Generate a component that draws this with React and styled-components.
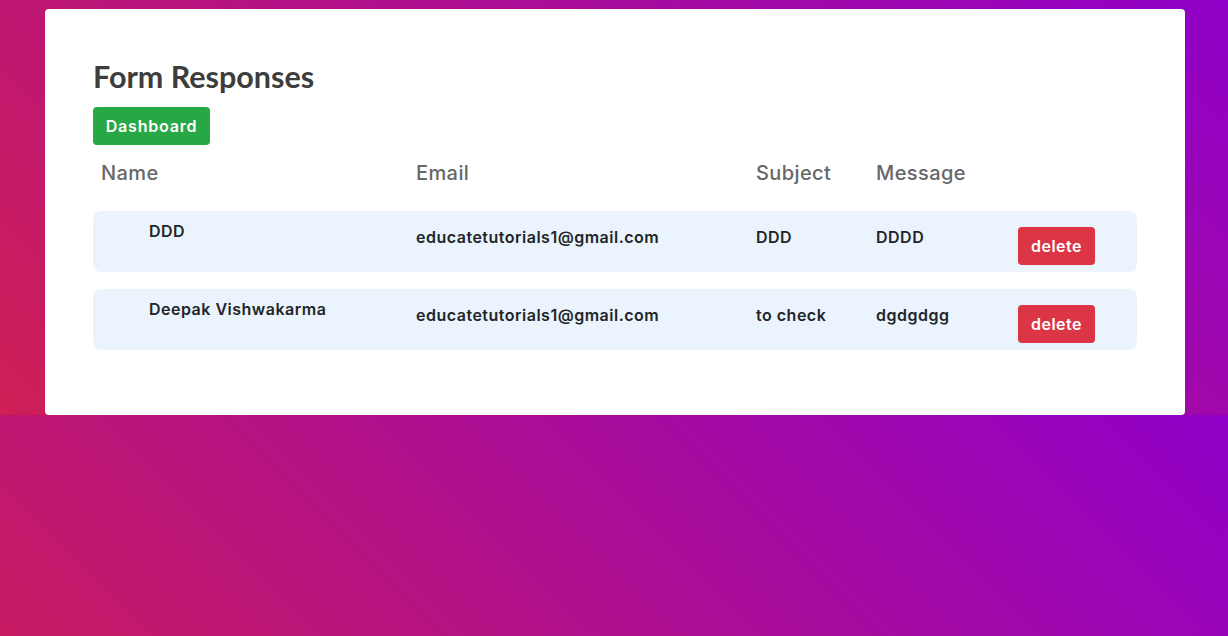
import React from 'react'
import styled, { createGlobalStyle } from 'styled-components'

const GlobalStyle = createGlobalStyle`
  html {
    background: linear-gradient(45deg, #ce1f55, #9000c8);
  }
  body {
    margin: 0;
    font-family: Inter, "Noto Sans", sans-serif;
  }
`

const responses = [
  { id: 1, name: 'DDD', email: 'educatetutorials1@gmail.com', subject: 'DDD', message: 'DDDD' },
  { id: 2, name: 'Deepak Vishwakarma', email: 'educatetutorials1@gmail.com', subject: 'to check', message: 'dgdgdgg' },
]

function App() {
  return (
    <>
      <GlobalStyle />
      <Page>
        <Card>
          <Title>Form Responses</Title>
          <DashboardButton>Dashboard</DashboardButton>
          <HeaderRow>
            <HeadCell $indent>Name</HeadCell>
            <HeadCell>Email</HeadCell>
            <HeadCell>Subject</HeadCell>
            <HeadCell>Message</HeadCell>
          </HeaderRow>
          <List>
            {responses.map((r) => (
              <Row key={r.id}>
                <NameCell>{r.name}</NameCell>
                <Cell>{r.email}</Cell>
                <Cell>{r.subject}</Cell>
                <Cell>{r.message}</Cell>
                <div>
                  <DeleteButton>delete</DeleteButton>
                </div>
              </Row>
            ))}
          </List>
        </Card>
      </Page>
    </>
  )
}

export default App

const Page = styled.div`
  padding-top: 9px;
`

const Card = styled.div`
  width: 1140px;
  box-sizing: border-box;
  margin-left: 45px;
  background: #fff;
  border-radius: 4px;
  padding: 48px 48px 65px;
`

const Title = styled.h2`
  margin: 0 0 12px;
  font-family: Lato, sans-serif;
  font-weight: 700;
  font-size: 30.5px;
  line-height: 38px;
  color: #3d3d3d;
`

const DashboardButton = styled.button`
  display: block;
  width: 117px;
  height: 38px;
  border: none;
  border-radius: 4px;
  background: #28a745;
  color: #fff;
  font-family: Inter, sans-serif;
  font-weight: 600;
  font-size: 16px;
  letter-spacing: 0.8px;
  padding: 0;
  cursor: pointer;
`

const grid = `
  display: grid;
  grid-template-columns: 323px 340px 120px 142px 1fr;
`

const HeaderRow = styled.div`
  ${grid}
  align-items: center;
  height: 56px;
`

const HeadCell = styled.div`
  padding-left: ${(p) => (p.$indent ? '8px' : '0')};
  font-size: 20px;
  font-weight: 500;
  letter-spacing: 0.4px;
  color: #676767;
`

const List = styled.div`
  display: flex;
  flex-direction: column;
  gap: 17px;
  margin-top: 10px;
`

const Row = styled.div`
  ${grid}
  align-items: start;
  box-sizing: border-box;
  height: 61px;
  padding-top: 16px;
  background: #ebf4fc;
  border-radius: 8px;
`

const Cell = styled.div`
  font-size: 16px;
  font-weight: 600;
  letter-spacing: 0.5px;
  color: #212529;
`

const NameCell = styled(Cell)`
  margin-top: -6px;
  padding-left: 56px;
`

const DeleteButton = styled.button`
  width: 77px;
  height: 38px;
  border: none;
  border-radius: 4px;
  background: #dc3545;
  color: #fff;
  font-family: Inter, sans-serif;
  font-weight: 600;
  font-size: 16px;
  letter-spacing: 0.5px;
  padding: 0;
  cursor: pointer;
`
